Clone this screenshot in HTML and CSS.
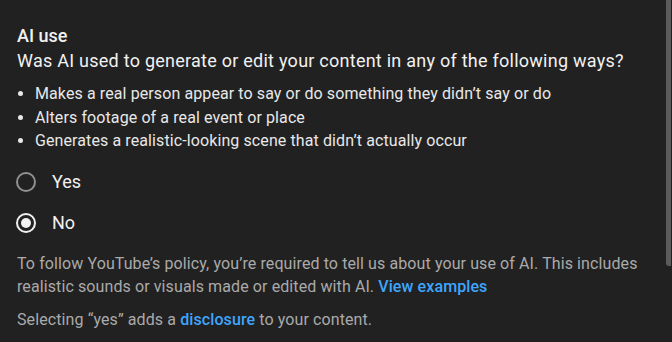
FILE: index.html
```html
<!DOCTYPE html>
<html>
<head>
<meta charset="utf-8">
<link rel="stylesheet" href="styles.css">
</head>
<body>
<div class="panel">
  <section class="content">
    <h2 class="title">AI use</h2>
    <p class="question">Was AI used to generate or edit your content in any of the following ways?</p>
    <ul class="ways">
      <li>Makes a real person appear to say or do something they didn’t say or do</li>
      <li>Alters footage of a real event or place</li>
      <li>Generates a realistic-looking scene that didn’t actually occur</li>
    </ul>
    <div class="radios">
      <label class="radio"><span class="circle"></span><span class="label">Yes</span></label>
      <label class="radio checked"><span class="circle"></span><span class="label">No</span></label>
    </div>
    <p class="note">To follow YouTube’s policy, you’re required to tell us about your use of AI. This includes realistic sounds or visuals made or edited with AI. <a class="link">View examples</a></p>
    <p class="note">Selecting “yes” adds a <a class="link">disclosure</a> to your content.</p>
  </section>
  <div class="scrollbar"><div class="thumb"></div></div>
</div>
</body>
</html>
```
FILE: styles.css
```css
html, body {
  margin: 0;
  padding: 0;
  background: #212121;
  width: 672px;
  height: 342px;
  overflow: hidden;
}
body {
  font-family: Roboto, "Noto Sans", sans-serif;
  color: #f1f1f1;
}
.panel {
  display: flex;
  width: 672px;
  height: 342px;
}
.content {
  flex: 1;
  padding: 24px 0 0 17px;
}
.title {
  margin: 0;
  font-size: 18px;
  font-weight: 500;
  line-height: 24px;
}
.question {
  margin: 0;
  font-size: 18px;
  line-height: 26px;
  font-weight: 400;
  letter-spacing: 0.25px;
}
.ways {
  margin: 8px 0 0 0;
  padding: 0 0 0 18px;
  font-size: 16px;
  line-height: 23.5px;
  letter-spacing: 0.1px;
  color: #e8e8e8;
}
.ways li::marker {
  font-size: 16px;
}
.radios {
  margin-top: 19px;
  display: flex;
  flex-direction: column;
  gap: 21px;
}
.radio {
  display: flex;
  align-items: center;
  gap: 16px;
  height: 20px;
  margin-left: -1px;
}
.circle {
  box-sizing: border-box;
  width: 20px;
  height: 20px;
  border-radius: 50%;
  border: 2px solid #909090;
  display: flex;
  align-items: center;
  justify-content: center;
}
.checked .circle {
  border-color: #f1f1f1;
}
.checked .circle::after {
  content: "";
  width: 10px;
  height: 10px;
  border-radius: 50%;
  background: #f1f1f1;
}
.label {
  font-size: 18px;
  line-height: 20px;
}
.note {
  margin: 0;
  font-size: 16px;
  line-height: 23.5px;
  letter-spacing: 0.1px;
  color: #aaaaaa;
}
.radios + .note {
  margin-top: 19px;
}
.note + .note {
  margin-top: 9px;
}
.link {
  color: #3ea6ff;
  font-weight: 500;
}
.scrollbar {
  width: 6px;
}
.thumb {
  width: 5px;
  height: 266px;
  background: #5b5b5b;
  border-radius: 0 0 0 3px;
}
```
